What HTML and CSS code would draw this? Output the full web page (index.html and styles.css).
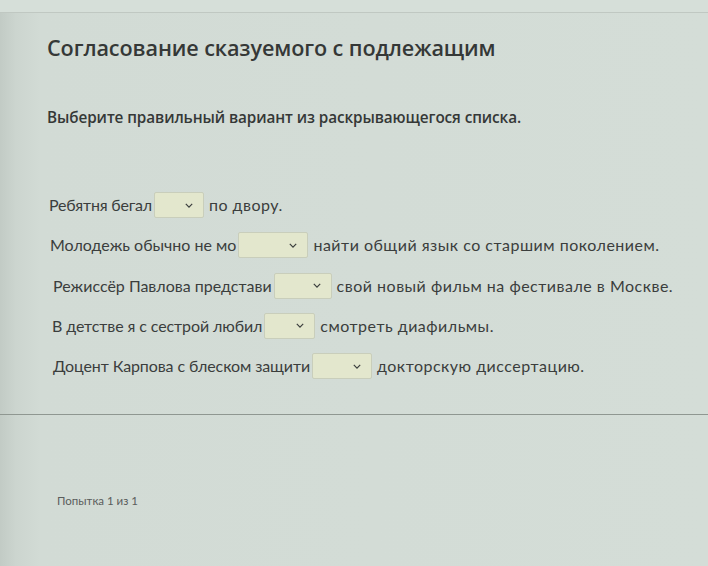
FILE: index.html
```html
<!DOCTYPE html>
<html lang="ru">
<head>
<meta charset="utf-8">
<title>Согласование сказуемого с подлежащим</title>
<link rel="stylesheet" href="styles.css">
</head>
<body>
<div class="page">
  <div class="topbar"></div>
  <main class="content">
    <h1 class="title">Согласование сказуемого с подлежащим</h1>
    <p class="instruction">Выберите правильный вариант из раскрывающегося списка.</p>
    <div class="questions">
      <div class="row row-1"><span>Ребятня бегал</span><span class="dd dd-1"><svg class="chev" viewBox="0 0 10 6"><path d="M1 1l4 4 4-4"/></svg></span><span class="tail">по двору.</span></div>
      <div class="row row-2"><span>Молодежь обычно не мо</span><span class="dd dd-2"><svg class="chev" viewBox="0 0 10 6"><path d="M1 1l4 4 4-4"/></svg></span><span class="tail">найти общий язык со старшим поколением.</span></div>
      <div class="row row-3"><span>Режиссёр Павлова представи</span><span class="dd dd-3"><svg class="chev" viewBox="0 0 10 6"><path d="M1 1l4 4 4-4"/></svg></span><span class="tail">свой новый фильм на фестивале в Москве.</span></div>
      <div class="row row-4"><span>В детстве я с сестрой любил</span><span class="dd dd-4"><svg class="chev" viewBox="0 0 10 6"><path d="M1 1l4 4 4-4"/></svg></span><span class="tail">смотреть диафильмы.</span></div>
      <div class="row row-5"><span>Доцент Карпова с блеском защити</span><span class="dd dd-5"><svg class="chev" viewBox="0 0 10 6"><path d="M1 1l4 4 4-4"/></svg></span><span class="tail">докторскую диссертацию.</span></div>
    </div>
  </main>
  <hr class="divider">
  <footer class="footer">Попытка 1 из 1</footer>
</div>
</body>
</html>
```
FILE: styles.css
```css
html, body {
  margin: 0;
  padding: 0;
}
body {
  width: 708px;
  height: 566px;
  overflow: hidden;
  background: linear-gradient(to right, #c2cbc5 0px, #ccd5cf 16px, #d2dbd5 40px, #d4ddd7 100%);
  font-family: Lato, "Open Sans", sans-serif;
  color: #3b3e3d;
}
.page {
  display: flex;
  flex-direction: column;
}
.topbar {
  height: 12px;
  border-bottom: 1px solid #c0c8c2;
  background: #d6dfd9;
}
.content {
  padding: 0 0 0 47px;
}
.title {
  margin: 20px 0 0 0;
  font-family: "Open Sans", sans-serif;
  font-weight: 600;
  font-size: 21.6px;
  line-height: 30px;
  color: #353837;
  letter-spacing: -0.1px;
}
.instruction {
  margin: 45px 0 0 0;
  font-family: "Open Sans", sans-serif;
  font-weight: 600;
  font-size: 15.3px;
  line-height: 18px;
  color: #353837;
  letter-spacing: -0.1px;
}
.questions {
  margin-top: 66px;
  display: flex;
  flex-direction: column;
  gap: 14.3px;
}
.row {
  display: flex;
  align-items: center;
  font-size: 16px;
  line-height: 26px;
  height: 26px;
  padding-left: 2px;
}
.row-1 { letter-spacing: -0.2px; }
.row-2 { padding-left: 3px; }
.row-3 { padding-left: 6px; }
.row-4 { padding-left: 5px; letter-spacing: -0.1px; }
.row-5 { padding-left: 6px; letter-spacing: -0.1px; }
.tail {
  letter-spacing: 0.5px;
}
.dd {
  display: inline-flex;
  align-items: center;
  justify-content: flex-end;
  box-sizing: border-box;
  height: 26px;
  margin: 0 5px 0 2px;
  padding-right: 10px;
  background: #e3e7cd;
  border: 1px solid #c9cebb;
  border-radius: 2px;
}
.dd-1 { width: 50px; }
.dd-2 { width: 70px; }
.dd-3 { width: 58px; }
.dd-4 { width: 51px; }
.dd-5 { width: 60px; }
.chev {
  width: 8px;
  height: 5px;
  fill: none;
  stroke: #3b3e3d;
  stroke-width: 1.5;
}
.divider {
  margin: 35px 0 0 0;
  border: 0;
  height: 1px;
  background: #8f9791;
}
.footer {
  margin: 79px 0 0 57px;
  font-size: 11.5px;
  color: #5a5d5c;
}
```
